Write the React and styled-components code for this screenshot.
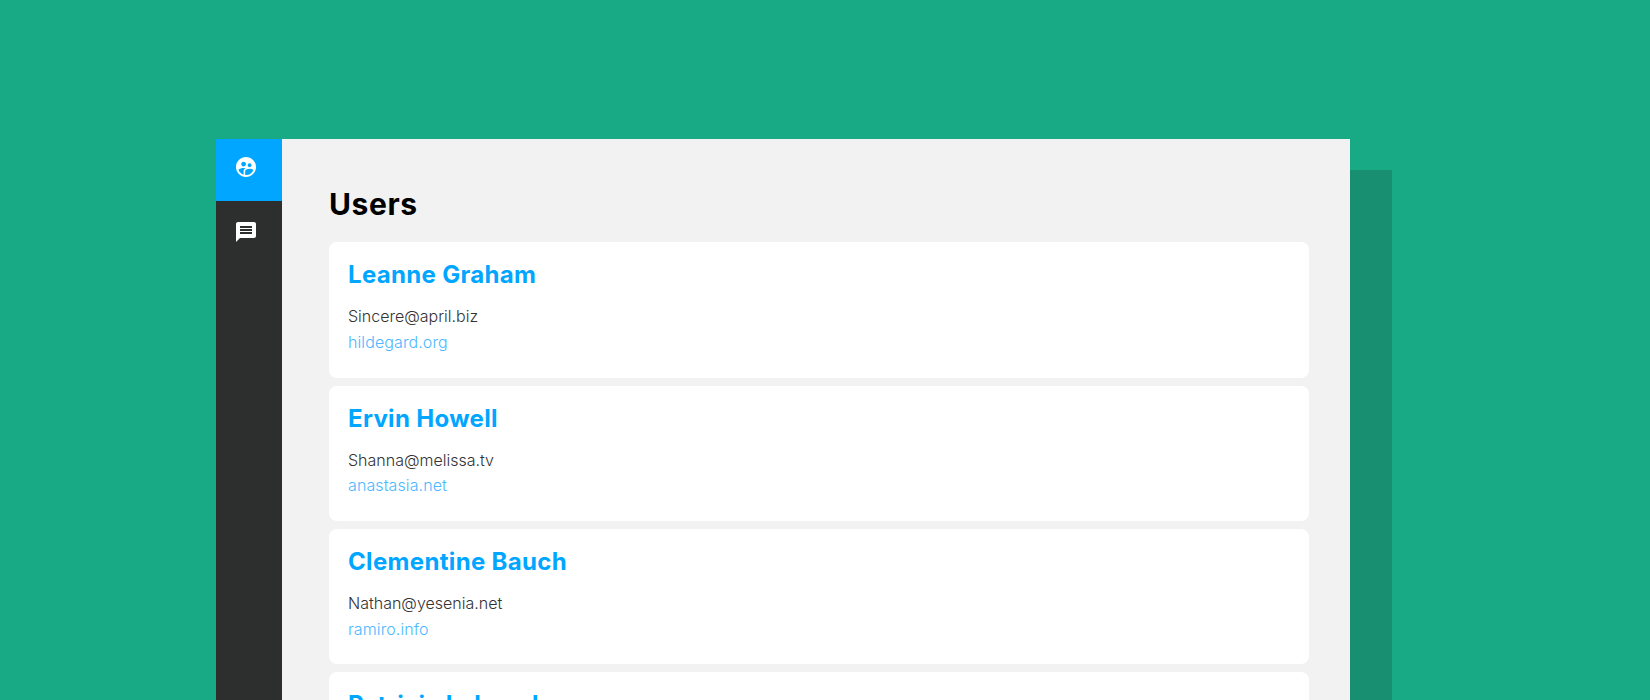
import React from "react";
import styled, {createGlobalStyle} from "styled-components";
import {MdSupervisedUserCircle, MdMessage} from "react-icons/md";

const users = [
  {name: "Leanne Graham", email: "Sincere@april.biz", site: "hildegard.org"},
  {name: "Ervin Howell", email: "Shanna@melissa.tv", site: "anastasia.net"},
  {name: "Clementine Bauch", email: "Nathan@yesenia.net", site: "ramiro.info"},
  {name: "Patricia Lebsack", email: "Julianne.OConner@kory.org", site: "kale.biz"},
];

const GlobalStyle = createGlobalStyle`
  html, body {
    margin: 0;
    height: 100%;
    overflow: hidden;
    background: #18aa84;
    font-family: Inter, "Open Sans", sans-serif;
  }
`;

const Page = styled.div`
  display: flex;
  height: 700px;
  padding: 139px 0 0 216px;
  box-sizing: border-box;
  overflow: hidden;
`;

const Sidebar = styled.nav`
  width: 66px;
  flex: none;
  background: #2d2e2e;
`;

const NavItem = styled.a`
  display: flex;
  height: ${({active}) => (active ? "62px" : "64px")};
  padding: ${({active}) => (active ? "16px" : "19px")} 0 0 18px;
  box-sizing: border-box;
  color: #fff;
  font-size: 24px;
  background: ${({active}) => (active ? "#00a6ff" : "transparent")};
`;

const Main = styled.main`
  width: 1068px;
  flex: none;
  padding: 46px 41px 0 47px;
  box-sizing: border-box;
  background: #f2f2f2;
`;

const Heading = styled.h1`
  margin: 0 0 19.33px;
  font-size: 30px;
  line-height: 38px;
  font-weight: 700;
  letter-spacing: 0.6px;
  color: #000;
`;

const UserList = styled.div`
  display: flex;
  flex-direction: column;
  gap: 8px;
`;

const Card = styled.article`
  height: 135.33px;
  flex: none;
  padding: 18px 19px 0;
  box-sizing: border-box;
  border-radius: 8px;
  background: #fff;
`;

const Name = styled.h2`
  margin: 0 0 14px;
  font-size: 24px;
  line-height: 30px;
  font-weight: 700;
  letter-spacing: 0.33px;
  color: #00a6ff;
`;

const Email = styled.p`
  margin: 0;
  font-size: 16px;
  line-height: 25.6px;
  font-weight: 300;
  color: #333;
`;

const Site = styled.a`
  display: block;
  font-size: 16px;
  line-height: 25.6px;
  font-weight: 300;
  letter-spacing: 0.1px;
  color: #4db8ff;
`;

const BackStrip = styled.div`
  width: 42px;
  flex: none;
  margin-top: 31px;
  background: #188f70;
`;

export default function App() {
  return (
    <>
      <GlobalStyle />
      <Page>
        <Sidebar>
          <NavItem active><MdSupervisedUserCircle /></NavItem>
          <NavItem><MdMessage /></NavItem>
        </Sidebar>
        <Main>
          <Heading>Users</Heading>
          <UserList>
            {users.map((user) => (
              <Card key={user.email}>
                <Name>{user.name}</Name>
                <Email>{user.email}</Email>
                <Site>{user.site}</Site>
              </Card>
            ))}
          </UserList>
        </Main>
        <BackStrip />
      </Page>
    </>
  );
}
